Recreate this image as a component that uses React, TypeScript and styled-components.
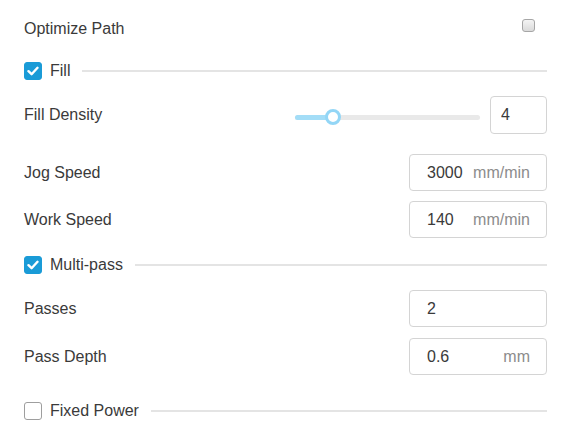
import React from "react";
import styled, { createGlobalStyle } from "styled-components";

const Global = createGlobalStyle`
  html, body { margin: 0; padding: 0; background: #fff; }
  body { font-family: "Liberation Sans", Arial, sans-serif; font-size: 16px; color: #3a3a3a; }
`;

const Panel = styled.div`
  width: 564px;
  box-sizing: border-box;
  padding: 10px 17px 0 24px;
  display: flex;
  flex-direction: column;
`;

const Row = styled.div<{ $mb?: number; $h?: number }>`
  display: flex;
  align-items: center;
  justify-content: space-between;
  height: ${(p) => p.$h ?? 37}px;
  margin-bottom: ${(p) => p.$mb ?? 0}px;
`;

const Label = styled.span`
  font-size: 16px;
  color: #3a3a3a;
  line-height: 1;
`;

const SmallCheck = styled.span`
  width: 13px;
  height: 13px;
  box-sizing: border-box;
  border: 1px solid #a6a6a6;
  border-radius: 3px;
  background: linear-gradient(#f4f4f4, #dadada);
  margin-right: 12px;
  margin-bottom: 6px;
`;

const Section = styled.div<{ $mt: number; $mb: number }>`
  display: flex;
  align-items: center;
  height: 18px;
  margin-top: ${(p) => p.$mt}px;
  margin-bottom: ${(p) => p.$mb}px;
`;

const Box = styled.span<{ $checked: boolean }>`
  width: 18px;
  height: 18px;
  box-sizing: border-box;
  border-radius: 3px;
  flex: none;
  display: flex;
  align-items: center;
  justify-content: center;
  background: ${(p) => (p.$checked ? "#1a9bd7" : "#fff")};
  border: 1px solid ${(p) => (p.$checked ? "#1a9bd7" : "#9e9e9e")};
`;

const SectionTitle = styled.span`
  margin-left: 8px;
  margin-right: 12px;
  font-size: 16px;
  color: #3a3a3a;
  line-height: 1;
`;

const Rule = styled.span`
  flex: 1;
  height: 2px;
  background: #e4e4e4;
`;

const SliderWrap = styled.div`
  display: flex;
  align-items: center;
  gap: 10px;
`;

const Track = styled.div`
  position: relative;
  width: 185px;
  height: 5px;
  border-radius: 3px;
  background: #e9e9e9;
  margin-top: 4px;
`;

const Fill = styled.div`
  position: absolute;
  left: 0;
  top: 0;
  height: 100%;
  border-radius: 3px;
  background: #a3ddf7;
`;

const Thumb = styled.div`
  position: absolute;
  top: 50%;
  width: 16px;
  height: 16px;
  box-sizing: border-box;
  border-radius: 50%;
  border: 3px solid #93d6f6;
  background: #fff;
  transform: translate(-50%, -50%);
`;

const Field = styled.div<{ $w: number; $pl: number; $h?: number }>`
  display: flex;
  align-items: center;
  width: ${(p) => p.$w}px;
  height: ${(p) => p.$h ?? 37}px;
  box-sizing: border-box;
  border: 1px solid #d4d4d4;
  border-radius: 4px;
  padding: 0 16px 0 ${(p) => p.$pl}px;
  background: #fff;
`;

const Value = styled.input`
  flex: 1;
  min-width: 0;
  border: none;
  outline: none;
  padding: 0;
  background: transparent;
  font-family: "Liberation Sans", Arial, sans-serif;
  font-size: 16px;
  color: #3a3a3a;
`;

const Unit = styled.span`
  font-size: 16px;
  color: #8c8c8c;
  margin-left: 1px;
`;

const Check = () => (
  <svg width="12" height="10" viewBox="0 0 12 10">
    <path d="M1.5 5.2 L4.6 8.2 L10.5 1.8" fill="none" stroke="#fff" strokeWidth="2.4" strokeLinecap="round" strokeLinejoin="round" />
  </svg>
);

const SectionHead = ({ title, checked, mt, mb }: { title: string; checked: boolean; mt: number; mb: number }) => (
  <Section $mt={mt} $mb={mb}>
    <Box $checked={checked}>{checked && <Check />}</Box>
    <SectionTitle>{title}</SectionTitle>
    <Rule />
  </Section>
);

const NumField = ({ value, unit }: { value: string; unit?: string }) => (
  <Field $w={138} $pl={17}>
    <Value readOnly value={value} />
    {unit && <Unit>{unit}</Unit>}
  </Field>
);

export default function App() {
  const pct = (333 - 295) / 185;
  return (
    <>
      <Global />
      <Panel>
        <Row $h={37}>
          <Label>Optimize Path</Label>
          <SmallCheck />
        </Row>
        <SectionHead title="Fill" checked mt={15} mb={16} />
        <Row $h={38} $mb={20}>
          <Label>Fill Density</Label>
          <SliderWrap>
            <Track>
              <Fill style={{ width: `${pct * 100}%` }} />
              <Thumb style={{ left: `${pct * 100}%` }} />
            </Track>
            <Field $w={57} $pl={10} $h={38}>
              <Value readOnly value="4" />
            </Field>
          </SliderWrap>
        </Row>
        <Row $mb={10}>
          <Label>Jog Speed</Label>
          <NumField value="3000" unit="mm/min" />
        </Row>
        <Row>
          <Label>Work Speed</Label>
          <NumField value="140" unit="mm/min" />
        </Row>
        <SectionHead title="Multi-pass" checked mt={18} mb={16} />
        <Row $mb={11}>
          <Label>Passes</Label>
          <NumField value="2" />
        </Row>
        <Row>
          <Label>Pass Depth</Label>
          <NumField value="0.6" unit="mm" />
        </Row>
        <SectionHead title="Fixed Power" checked={false} mt={27} mb={0} />
      </Panel>
    </>
  );
}
